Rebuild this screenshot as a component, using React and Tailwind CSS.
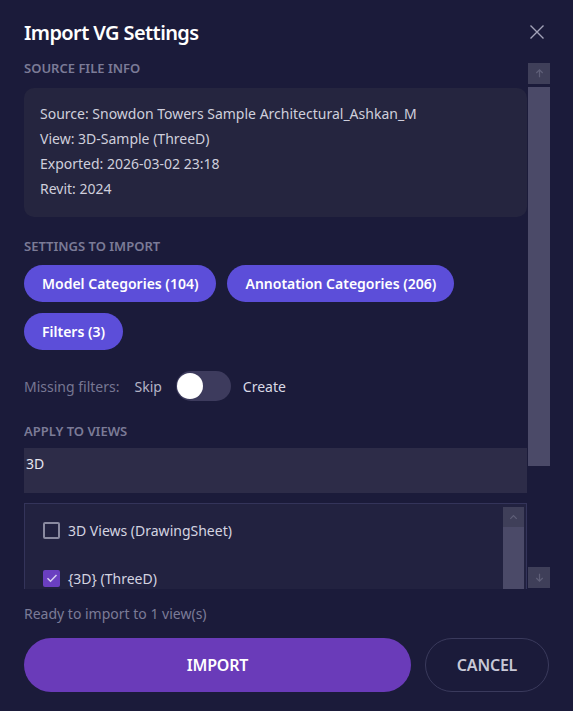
import React from "react";

const ArrowUp = ({ className }) => (
  <svg viewBox="0 0 12 12" className={className} fill="none" stroke="currentColor" strokeWidth="1.3">
    <path d="M6 10V2M2.5 5.5L6 2l3.5 3.5" />
  </svg>
);

const ArrowDown = ({ className }) => (
  <svg viewBox="0 0 12 12" className={className} fill="none" stroke="currentColor" strokeWidth="1.3">
    <path d="M6 2v8M2.5 6.5L6 10l3.5-3.5" />
  </svg>
);

const Chevron = ({ className }) => (
  <svg viewBox="0 0 12 12" className={className} fill="none" stroke="currentColor" strokeWidth="1.3">
    <path d="M2.5 7.5L6 4l3.5 3.5" />
  </svg>
);

const chips = ["Model Categories (104)", "Annotation Categories (206)", "Filters (3)"];

const views = [
  { name: "3D Views (DrawingSheet)", checked: false },
  { name: "{3D} (ThreeD)", checked: true },
];

export default function App() {
  return (
    <div className="w-[573px] h-[711px] bg-[#1b1b3a] font-['Noto_Sans',sans-serif] text-white overflow-hidden flex flex-col">
      {/* header */}
      <div className="h-[60px] flex items-start justify-between pl-6 pr-[28px] pt-[18px] shrink-0">
        <h1 className="text-[20px] leading-[30px] font-semibold tracking-[-0.6px]">Import VG Settings</h1>
        <svg viewBox="0 0 16 16" className="w-[16px] h-[16px] mt-[6px] text-[#a3a3b8]" fill="none" stroke="currentColor" strokeWidth="1.4">
          <path d="M1.5 1.5l13 13M14.5 1.5l-13 13" />
        </svg>
      </div>

      {/* scroll area */}
      <div className="h-[529px] flex ml-6 mr-[23px] shrink-0">
        <div className="flex-1 overflow-hidden">
          <div className="-mt-px text-[13px] leading-[18px] font-semibold text-[#7b7b97]">SOURCE FILE INFO</div>
          <div className="mt-[11px] h-[129px] rounded-[10px] bg-[#25253f] pl-4 pt-[13px] text-[14px] leading-[25px] text-[#cfcfdc]">
            <div>Source: Snowdon Towers Sample Architectural_Ashkan_M</div>
            <div>View: 3D-Sample (ThreeD)</div>
            <div>Exported: 2026-03-02 23:18</div>
            <div>Revit: 2024</div>
          </div>

          <div className="mt-[20px] text-[13px] leading-[18px] font-semibold text-[#7b7b97]">SETTINGS TO IMPORT</div>
          <div className="mt-[10px] flex flex-wrap gap-x-[11px] gap-y-[11px]">
            {chips.map((c) => (
              <div key={c} className="h-[37px] px-[18px] rounded-full bg-[#5c4ed9] flex items-center text-[14px] font-semibold">
                {c}
              </div>
            ))}
          </div>

          <div className="mt-[21px] h-[30px] flex items-center text-[14px]">
            <span className="text-[#777793]">Missing filters:</span>
            <span className="ml-[15px] text-[#b4b4c6]">Skip</span>
            <div className="ml-[14px] w-[55px] h-[30px] rounded-full bg-[#3d3b5d] flex items-center pl-[1px]">
              <div className="w-[26px] h-[26px] rounded-full bg-white" />
            </div>
            <span className="ml-[12px] text-[#d9d9e6]">Create</span>
          </div>

          <div className="mt-[21px] text-[13px] leading-[18px] font-semibold text-[#7b7b97]">APPLY TO VIEWS</div>
          <div className="mt-[8px] h-[45px] bg-[#2d2c48] pl-[2px] pt-[6px] text-[14px] leading-[20px] text-[#e6e6ef]">3D</div>

          <div className="mt-[10px] h-[86px] border border-b-0 border-[#34345a] bg-[#222240] flex overflow-hidden">
            <div className="flex-1 pl-[18px] pt-[2px]">
              {views.map((v) => (
                <div key={v.name} className="h-[48px] flex items-center gap-[8px] text-[14px] text-[#d4d4e0]">
                  {v.checked ? (
                    <div className="w-[17px] h-[17px] rounded-[2px] bg-[#6a3fc0] flex items-center justify-center">
                      <svg viewBox="0 0 12 12" className="w-[12px] h-[12px] text-[#d8d0f0]" fill="none" stroke="currentColor" strokeWidth="1.5">
                        <path d="M1.5 6.2l3 3L10.5 3" />
                      </svg>
                    </div>
                  ) : (
                    <div className="w-[17px] h-[17px] rounded-[2px] border-2 border-[#8a8aa0]" />
                  )}
                  <span>{v.name}</span>
                </div>
              ))}
            </div>
            <div className="w-[21px] mt-[3px] mr-[2px] bg-[#4b4a68] flex flex-col">
              <div className="h-[20px] bg-[#3f3f59] flex items-center justify-center">
                <Chevron className="w-[11px] h-[11px] text-[#5f5f78]" />
              </div>
            </div>
          </div>
        </div>

        {/* outer scrollbar */}
        <div className="w-[22px] ml-px flex flex-col pt-[3px]">
          <div className="h-[21px] bg-[#3f3f59] flex items-center justify-center">
            <ArrowUp className="w-[11px] h-[11px] text-[#5f5f78]" />
          </div>
          <div className="mt-[3px] h-[379px] bg-[#4b4a68]" />
          <div className="flex-1" />
          <div className="h-[21px] mb-px bg-[#3f3f59] flex items-center justify-center">
            <ArrowDown className="w-[11px] h-[11px] text-[#5f5f78]" />
          </div>
        </div>
      </div>

      {/* footer */}
      <div className="px-6 pt-[15px]">
        <div className="text-[14px] leading-[20px] text-[#7b7b97]">Ready to import to 1 view(s)</div>
        <div className="mt-[14px] flex gap-[14px]">
          <button className="w-[387px] h-[54px] rounded-full bg-[#6a3bb9] text-[16px] font-semibold text-white tracking-[-0.2px]">
            IMPORT
          </button>
          <button className="w-[124px] h-[54px] rounded-full border border-[#3a3a5c] text-[16px] font-semibold text-[#c8c8d6] tracking-[-0.2px]">
            CANCEL
          </button>
        </div>
      </div>
    </div>
  );
}
